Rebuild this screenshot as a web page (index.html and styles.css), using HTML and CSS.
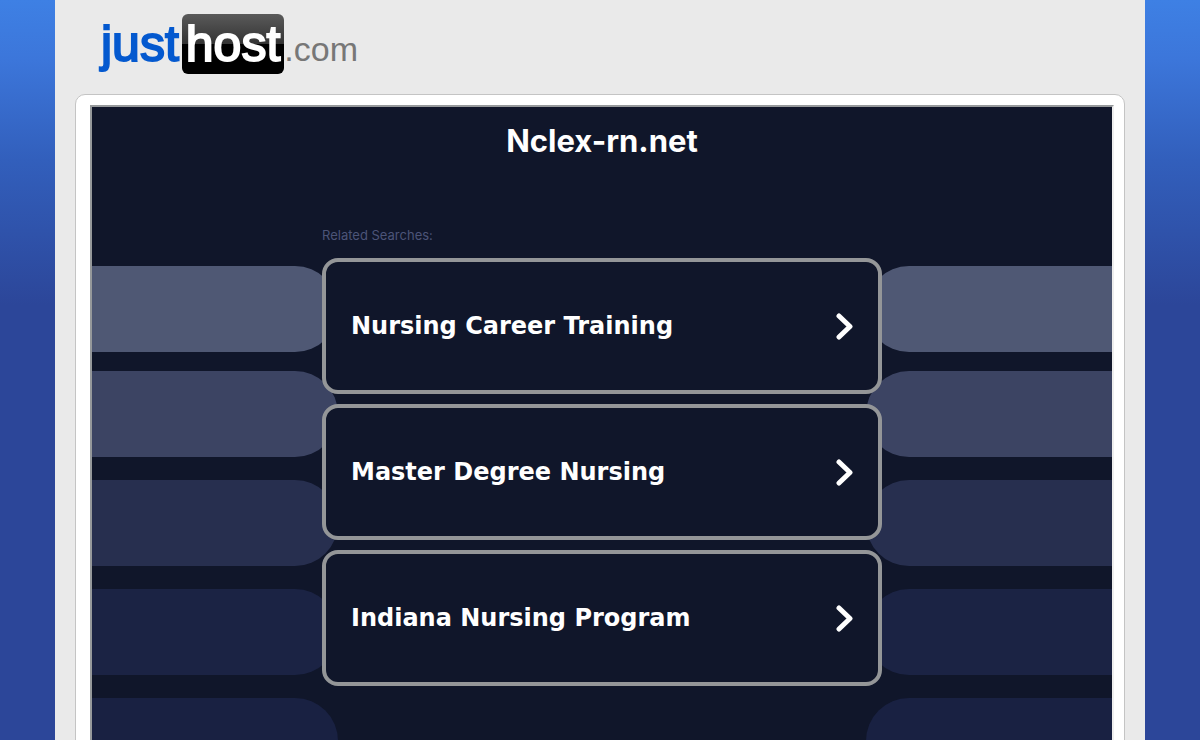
FILE: index.html
```html
<!DOCTYPE html>
<html lang="en">
<head>
    <meta charset="UTF-8">
    <meta name="viewport" content="width=device-width, initial-scale=1.0">
    <title>Nclex-rn.net</title>
    <link rel="stylesheet" href="styles.css">
</head>
<body>
    <div class="page">
        <header class="header">
            <a href="#" class="logo"><span class="logo-just">just</span><span class="logo-host">host</span><span class="logo-com">.com</span></a>
        </header>
        <div class="content">
            <main class="frame">
                <div class="bands" aria-hidden="true">
                    <div class="band-column">
                        <div class="band band-1"></div>
                        <div class="band band-2"></div>
                        <div class="band band-3"></div>
                        <div class="band band-4"></div>
                        <div class="band band-5"></div>
                    </div>
                    <div class="band-column right">
                        <div class="band band-1"></div>
                        <div class="band band-2"></div>
                        <div class="band band-3"></div>
                        <div class="band band-4"></div>
                        <div class="band band-5"></div>
                    </div>
                </div>
                <h1>Nclex-rn.net</h1>
                <div class="searches">
                    <p class="label">Related Searches:</p>
                    <a href="#" class="search">
                        <span>Nursing Career Training</span>
                        <svg class="arrow" viewBox="0 0 18 28"><path d="M3 4L14 14.500L3 25"/></svg>
                    </a>
                    <a href="#" class="search">
                        <span>Master Degree Nursing</span>
                        <svg class="arrow" viewBox="0 0 18 28"><path d="M3 4L14 14.500L3 25"/></svg>
                    </a>
                    <a href="#" class="search">
                        <span>Indiana Nursing Program</span>
                        <svg class="arrow" viewBox="0 0 18 28"><path d="M3 4L14 14.500L3 25"/></svg>
                    </a>
                </div>
            </main>
        </div>
    </div>
</body>
</html>
```
FILE: styles.css
```css
* {
    box-sizing: border-box;
}
body {
    margin: 0;
    font-family: Inter, "Liberation Sans", sans-serif;
    background: #2c4699 linear-gradient(#3e80e4 0, #3c76da 60px, #325fbc 160px, #2c4699 305px) no-repeat;
}
.page {
    max-width: 1090px;
    min-height: 100vh;
    margin: 0 auto;
    padding: 0 20px 20px;
    background-color: #eaeaea;
}

/* Logo */
.header {
    padding: 14px 24px 20px;
}
.logo {
    display: flex;
    align-items: baseline;
    height: 60px;
    font-family: "Liberation Sans", Arial, sans-serif;
    font-size: 50px;
    line-height: 60px;
    text-decoration: none;
}
.logo-just {
    margin: 0 3px 0 2px;
    color: #0459cf;
    -webkit-text-stroke: 2px #0459cf;
}
.logo-host {
    padding: 0 4px;
    border-radius: 6px;
    color: #fff;
    background: linear-gradient(#5a5a5a, #333 50%, #000 50%);
    -webkit-text-stroke: 2px #fff;
}
.logo-com {
    color: #777;
    font-size: 34px;
}

/* White box with the parked page inside */
.content {
    padding: 10px 10px 10px 14px;
    border: 1px solid #c4c4c4;
    border-radius: 10px;
    background-color: #fff;
}
.frame {
    position: relative;
    min-height: 700px;
    padding: 16px 20px;
    overflow: hidden;
    border: 2px solid #eee;
    border-top-color: #96999b;
    border-left-color: #96999b;
    background-color: #10162a;
}
.bands {
    position: absolute;
    inset: 0;
    display: flex;
    justify-content: space-between;
    padding-top: 159px;
}
.band-column {
    display: flex;
    flex-direction: column;
    gap: 23px;
    width: 246px;
}
.band {
    height: 86px;
    border-radius: 0 43px 43px 0;
}
.right .band {
    border-radius: 43px 0 0 43px;
}
.band-1 {
    margin-bottom: -4px;
    background-color: #4f5874;
}
.band-2 {
    background-color: #3c4463;
}
.band-3 {
    background-color: #272f4f;
}
.band-4 {
    background-color: #1b2344;
}
.band-5 {
    background-color: #192142;
}

h1 {
    position: relative;
    margin: 0;
    color: #fff;
    font-size: 31px;
    font-weight: bold;
    line-height: 36px;
    text-align: center;
}
.searches {
    position: relative;
    display: flex;
    flex-direction: column;
    gap: 10px;
    max-width: 560px;
    margin: 66px auto 0;
}
.label {
    margin: 0 0 3px;
    color: #4c5478;
    font-size: 13px;
    line-height: 20px;
}
.search {
    display: flex;
    align-items: center;
    justify-content: space-between;
    height: 136px;
    padding: 0 24px 0 25px;
    border: 4px solid #949698;
    border-radius: 16px;
    color: #fff;
    background-color: #10162a;
    font-family: Verdana, "DejaVu Sans", sans-serif;
    font-size: 24px;
    font-weight: bold;
    text-decoration: none;
}
.search:hover {
    border-color: #fff;
}
.arrow {
    width: 18px;
    height: 28px;
    fill: none;
    stroke: #fff;
    stroke-width: 5;
    stroke-linecap: round;
    stroke-linejoin: round;
}
```
